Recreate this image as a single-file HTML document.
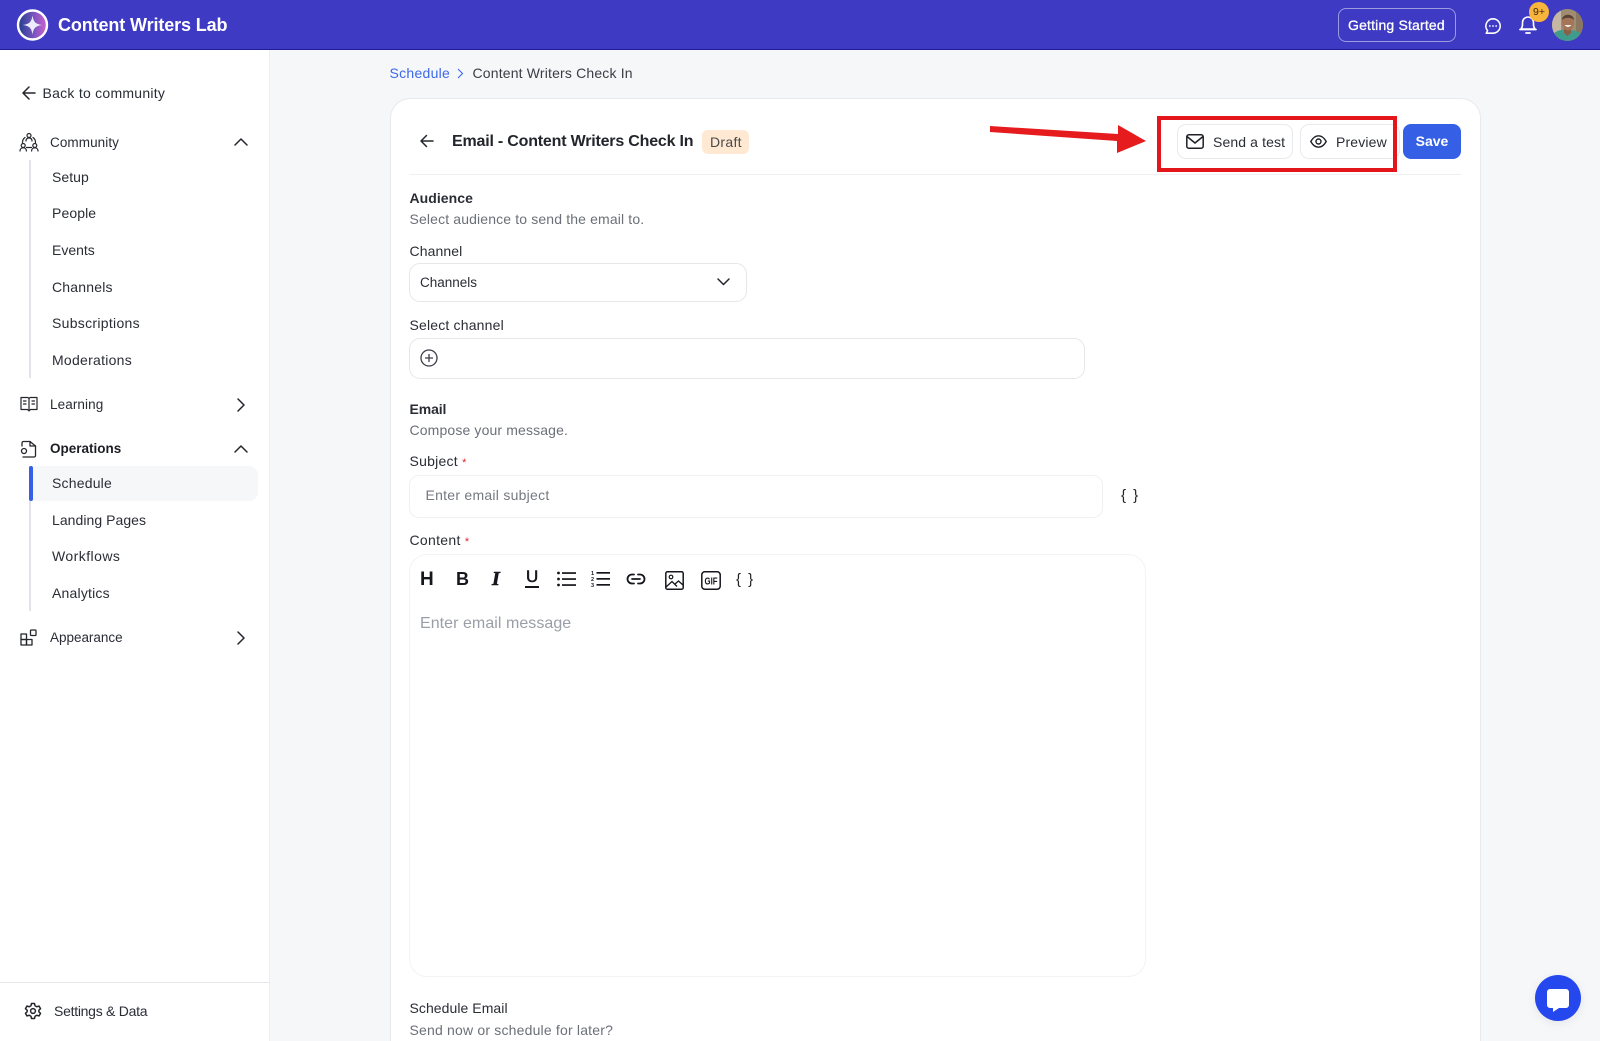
<!DOCTYPE html>
<html><head><meta charset="utf-8"><title>Content Writers Lab</title>
<style>
html,body{margin:0;padding:0;width:1600px;height:1041px;overflow:hidden;background:#f6f7f9;font-family:"Liberation Sans",sans-serif;color:#23262e}
#w{position:relative;width:1600px;height:1041px;overflow:hidden;background:#f6f7f9}
.a{position:absolute;box-sizing:border-box}
.t{position:absolute;white-space:nowrap;line-height:20px;font-size:14px;color:#2a2d35}
.m{color:#6b7078}
.b{font-weight:bold}
svg{position:absolute;overflow:visible}
.i{fill:none;stroke:#24262c;stroke-width:1.5;stroke-linecap:round;stroke-linejoin:round}
</style></head><body><div id="w">

<!-- header -->
<div class="a" style="left:0;top:0;width:1600px;height:50px;background:#3e3ac3;border-bottom:1px solid #1f1c96"></div>
<svg style="left:0;top:0" width="70" height="50"><defs><linearGradient id="g" x1="0" x2="1" y1="0" y2="0"><stop offset="0" stop-color="#1f3f8e"/><stop offset=".55" stop-color="#7a55c0"/><stop offset="1" stop-color="#d15fd0"/></linearGradient></defs>
<circle cx="32.500" cy="25" r="14.500" fill="url(#g)" stroke="#fff" stroke-width="2.400"/>
<path d="M32.500 15.500C33.600 22 35.500 24 42 25C35.500 26 33.600 28 32.500 34.500C31.400 28 29.500 26 23 25C29.500 24 31.400 22 32.500 15.500Z" fill="#ecebfc"/></svg>
<div class="t b" style="left:58px;top:15px;font-size:18px;color:#fff;letter-spacing:-.12px">Content Writers Lab</div>
<div class="a" style="left:1338px;top:8px;width:118px;height:34px;border:1px solid #9d9be0;border-radius:8px"></div>
<div class="t" style="left:1348px;top:15px;color:#fff;letter-spacing:.18px;-webkit-text-stroke:.3px #fff">Getting Started</div>
<svg style="left:1483.500px;top:16.500px" width="18" height="18" viewBox="0 0 20 20"><path d="M10 2a8 8 0 0 1 0 16H2.500l1.500-2.800A8 8 0 0 1 10 2Z" fill="none" stroke="#fff" stroke-width="1.700" stroke-linejoin="round"/><circle cx="6.500" cy="10" r="1" fill="#fff"/><circle cx="10" cy="10" r="1" fill="#fff"/><circle cx="13.500" cy="10" r="1" fill="#fff"/></svg>
<svg style="left:1519px;top:15px" width="18" height="20" viewBox="0 0 18 20"><path d="M2 14c1-1.200 1.500-2 1.500-4.500V7.500a5.500 5.500 0 0 1 11 0v2c0 2.500.5 3.300 1.500 4.500Z" fill="none" stroke="#fff" stroke-width="1.600" stroke-linejoin="round"/><path d="M1 14.500h16M7 18h4" stroke="#fff" stroke-width="1.800" stroke-linecap="round"/></svg>
<div class="a" style="left:1529px;top:2px;width:20px;height:20px;border-radius:50%;background:#f9b43c;color:#3a2a10;font-size:10.500px;line-height:20px;text-align:center">9+</div>
<svg style="left:1552px;top:9px" width="31" height="32" viewBox="0 0 31 32"><defs><clipPath id="c"><ellipse cx="15.500" cy="16" rx="15.500" ry="16"/></clipPath></defs><g clip-path="url(#c)"><rect width="31" height="32" fill="#a08c70"/><rect width="9" height="32" fill="#c4b8a4"/><rect x="24" width="7" height="32" fill="#8a7760"/><path d="M0 32V26C5 21 10 20 15 22C21 20 27 22 31 27V32Z" fill="#3f9b8c"/><path d="M12 19h7v5l-3.500 3L12 24Z" fill="#8a5f48"/><ellipse cx="16" cy="13.500" rx="6" ry="8" fill="#a5755a"/><path d="M10 11C10 4 22 4 22 11C19 8 13 8 10 11Z" fill="#5a4238"/><path d="M12.500 16Q16 20 19.500 16Z" fill="#f3eee8"/></g></svg>

<!-- sidebar -->
<div class="a" style="left:0;top:50px;width:270px;height:991px;background:#fff;border-right:1px solid #eceef1"></div>
<svg style="left:22px;top:85px" width="14" height="16" viewBox="0 0 14 16"><path class="i" d="M13 8H1M7 2 1 8l6 6"/></svg>
<div class="t" style="left:42.500px;top:83px;letter-spacing:.26px">Back to community</div>

<svg style="left:19px;top:132px" width="20" height="20" viewBox="0 0 20 20"><g class="i" style="stroke-width:1.200"><circle cx="10" cy="3.500" r="2"/><path d="M7 9c0-2 1.300-3 3-3s3 1 3 3"/><circle cx="4.200" cy="13.500" r="2"/><path d="M1 19c0-2 1.400-3.200 3.200-3.200S7.400 17 7.400 19"/><circle cx="15.800" cy="13.500" r="2"/><path d="M12.600 19c0-2 1.400-3.200 3.200-3.200s3.200 1.200 3.200 3.200"/><path d="M3.500 10.500C3.500 8 4.500 6.500 6 5.500M16.500 10.500c0-2.500-1-4-2.500-5M7.500 15.500h5"/></g></svg>
<div class="t" style="left:50px;top:133px;font-size:13.500px;letter-spacing:.08px">Community</div>
<svg style="left:234px;top:138px" width="14" height="8" viewBox="0 0 14 8"><path class="i" d="M1 7l6-6 6 6"/></svg>
<div class="a" style="left:29px;top:160px;width:2px;height:218px;background:#e1e3e8"></div>
<div class="t" style="left:52px;top:167px;letter-spacing:.05px">Setup</div>
<div class="t" style="left:52px;top:203px;letter-spacing:.1px">People</div>
<div class="t" style="left:52px;top:240px;letter-spacing:0">Events</div>
<div class="t" style="left:52px;top:277px;letter-spacing:.2px">Channels</div>
<div class="t" style="left:52px;top:313px;letter-spacing:.3px">Subscriptions</div>
<div class="t" style="left:52px;top:350px;letter-spacing:.27px">Moderations</div>

<svg style="left:20px;top:396px" width="18" height="16" viewBox="0 0 18 16"><g class="i" style="stroke-width:1.200"><path d="M1 1.500h7l1 1 1-1h7v12h-6.500L9 15l-1.500-1.500H1Z"/><path d="M9 2.500v11M3.500 5H6M3.500 8H6M12 5h2.500M12 8h2.500"/></g></svg>
<div class="t" style="left:50px;top:395px;font-size:13.500px;letter-spacing:.1px">Learning</div>
<svg style="left:237px;top:398px" width="8" height="14" viewBox="0 0 8 14"><path class="i" d="M1 1l6 6-6 6"/></svg>

<svg style="left:20px;top:440px" width="17" height="18" viewBox="0 0 17 18"><g class="i" style="stroke-width:1.300"><path d="M2 6V3a1.500 1.500 0 0 1 1.500-1.500H10L15.500 6v9.500A1.500 1.500 0 0 1 14 17H3"/><path d="M10 1.500V6h5.500"/><circle cx="4" cy="11" r="2.500"/></g></svg>
<div class="t b" style="left:50px;top:439px;font-size:13.500px;letter-spacing:0;color:#1c1e24">Operations</div>
<svg style="left:234px;top:445px" width="14" height="8" viewBox="0 0 14 8"><path class="i" d="M1 7l6-6 6 6"/></svg>
<div class="a" style="left:29px;top:466px;width:2px;height:145px;background:#e1e3e8"></div>
<div class="a" style="left:30px;top:466px;width:228px;height:35px;background:#f6f7f9;border-radius:0 9px 9px 0"></div>
<div class="a" style="left:29px;top:466px;width:4px;height:35px;background:#3560e6;border-radius:3px"></div>
<div class="t" style="left:52px;top:473px;letter-spacing:.2px">Schedule</div>
<div class="t" style="left:52px;top:510px;letter-spacing:.05px">Landing Pages</div>
<div class="t" style="left:52px;top:546px;letter-spacing:.45px">Workflows</div>
<div class="t" style="left:52px;top:583px;letter-spacing:.2px">Analytics</div>

<svg style="left:20px;top:629px" width="17" height="17" viewBox="0 0 17 17"><g class="i" style="stroke-width:1.300"><rect x="1" y="5" width="5.500" height="5.500"/><rect x="1" y="10.500" width="5.500" height="5.500"/><rect x="6.500" y="10.500" width="5.500" height="5.500"/><rect x="10.500" y="1" width="5.500" height="5.500" rx=".8"/></g></svg>
<div class="t" style="left:50px;top:628px;font-size:13.500px;letter-spacing:-.02px">Appearance</div>
<svg style="left:237px;top:631px" width="8" height="14" viewBox="0 0 8 14"><path class="i" d="M1 1l6 6-6 6"/></svg>

<div class="a" style="left:0;top:982px;width:269px;height:1px;background:#e4e6ea"></div>
<svg style="left:24px;top:1002px" width="18" height="18" viewBox="0 0 24 24"><g class="i" style="stroke-width:2"><circle cx="12" cy="12" r="3.200"/><path d="M10 2h4l.7 3 2.300 1.300 3-.9 2 3.500-2.200 2.100v2l2.200 2.100-2 3.500-3-.9L14.700 19 14 22h-4l-.7-3L7 17.700l-3 .9-2-3.500L4.200 13v-2L2 8.900l2-3.500 3 .9L9.300 5Z"/></g></svg>
<div class="t" style="left:54px;top:1001px;font-size:14px;letter-spacing:-.27px">Settings &amp; Data</div>

<!-- breadcrumb -->
<div class="t" style="left:389.500px;top:63px;color:#3d68e8;letter-spacing:.28px">Schedule</div>
<svg style="left:457px;top:68px" width="7" height="11" viewBox="0 0 7 11"><path d="M1 1l4.500 4.500L1 10" fill="none" stroke="#3d68e8" stroke-width="1.100"/></svg>
<div class="t" style="left:472.500px;top:63px;letter-spacing:.17px;color:#3a3d45">Content Writers Check In</div>

<!-- card -->
<div class="a" style="left:390px;top:98px;width:1091px;height:943px;background:#fff;border:1px solid #e8e9ed;border-bottom:0;border-radius:20px 20px 0 0"></div>
<svg style="left:420px;top:134px" width="14" height="14" viewBox="0 0 14 14"><path class="i" d="M13 7H1M6.500 1.500 1 7l5.500 5.500"/></svg>
<div class="t b" style="left:452px;top:132px;font-size:16px;letter-spacing:-.2px;color:#22252b">Email - Content Writers Check In</div>
<div class="a" style="left:702px;top:130px;width:47px;height:24px;background:#ffe9d3;border-radius:6px"></div>
<div class="t" style="left:710px;top:132px;letter-spacing:.3px;color:#4a4a4a">Draft</div>
<div class="a" style="left:409px;top:174px;width:1052px;height:1px;background:#eff0f2"></div>

<!-- test / preview -->
<div class="a" style="left:1177px;top:124px;width:116px;height:35px;border:1px solid #e9eaed;border-radius:9px"></div>
<svg style="left:1186px;top:134px" width="18" height="15" viewBox="0 0 18 15"><rect x=".8" y=".8" width="16.400" height="13.400" rx="2" fill="none" stroke="#1e2026" stroke-width="1.500"/><path d="M1 2.500 9 9l8-6.500" fill="none" stroke="#1e2026" stroke-width="1.500"/></svg>
<div class="t" style="left:1213px;top:132px;letter-spacing:.12px">Send a test</div>
<div class="a" style="left:1300px;top:124px;width:100px;height:35px;border:1px solid #e9eaed;border-radius:9px"></div>
<svg style="left:1310px;top:135px" width="17" height="13" viewBox="0 0 17 13"><path d="M.8 6.500C3 2.500 5.500.8 8.500.8S14 2.500 16.200 6.500C14 10.500 11.500 12.200 8.500 12.200S3 10.500.8 6.500Z" fill="none" stroke="#1e2026" stroke-width="1.400"/><circle cx="8.500" cy="6.500" r="2.500" fill="none" stroke="#1e2026" stroke-width="1.400"/></svg>
<div class="t" style="left:1336px;top:132px;letter-spacing:.15px;background:#fff;padding-right:6px">Preview</div>
<div class="a" style="left:1157px;top:116px;width:240px;height:56px;border:4.500px solid #e4161c"></div>
<svg style="left:0;top:0" width="1200" height="200"><path d="M990 126 1118 134V125L1146 141 1117 153V141L990 132Z" fill="#e51b1e"/></svg>
<div class="a b" style="left:1403px;top:124px;width:58px;height:35px;background:#3560e6;border-radius:8px;color:#fff;font-size:14px;line-height:35px;text-align:center;letter-spacing:0">Save</div>

<!-- form -->
<div class="t b" style="left:409.500px;top:188px;letter-spacing:.05px">Audience</div>
<div class="t m" style="left:409.500px;top:209px;letter-spacing:.14px">Select audience to send the email to.</div>
<div class="t" style="left:409.500px;top:241px;letter-spacing:.1px">Channel</div>
<div class="a" style="left:409px;top:263px;width:338px;height:39px;border:1px solid #e6e7eb;border-radius:11px"></div>
<div class="t" style="left:420px;top:273px;font-size:13.500px;letter-spacing:0">Channels</div>
<svg style="left:717px;top:278px" width="13" height="8" viewBox="0 0 13 8"><path class="i" d="M1 1l5.500 5.500L12 1"/></svg>
<div class="t" style="left:409.500px;top:315px;letter-spacing:.18px">Select channel</div>
<div class="a" style="left:409px;top:338px;width:676px;height:41px;border:1px solid #e6e7eb;border-radius:11px"></div>
<svg style="left:420px;top:349px" width="18" height="18" viewBox="0 0 18 18"><circle cx="9" cy="9" r="8" fill="none" stroke="#3c3e48" stroke-width="1.300"/><path d="M9 5v8M5 9h8" stroke="#3c3e48" stroke-width="1.300"/></svg>

<div class="t b" style="left:409.500px;top:399px;letter-spacing:-.1px">Email</div>
<div class="t m" style="left:409.500px;top:420px;letter-spacing:.14px">Compose your message.</div>
<div class="t" style="left:409.500px;top:451px;letter-spacing:.25px">Subject <span style="color:#e5202a;font-size:11px">*</span></div>
<div class="a" style="left:409px;top:475px;width:694px;height:43px;border:1px solid #f0f1f3;border-radius:10px"></div>
<div class="t m" style="left:425.500px;top:485px;letter-spacing:.26px;color:#757980">Enter email subject</div>
<div class="t" style="left:1121px;top:486px;font-size:15px;letter-spacing:1.500px;color:#222">{ }</div>
<div class="t" style="left:409.500px;top:530px;letter-spacing:.3px">Content <span style="color:#e5202a;font-size:11px">*</span></div>
<div class="a" style="left:409px;top:554px;width:737px;height:423px;border:1px solid #f2f3f5;border-radius:18px"></div>

<!-- toolbar -->
<div class="t b" style="left:420px;top:569px;font-size:19px;line-height:22px;letter-spacing:0;color:#15171c">H</div>
<div class="t b" style="left:456px;top:569px;font-size:18px;line-height:20px;letter-spacing:0;color:#15171c">B</div>
<div class="t b" style="left:492px;top:569px;font-family:'Liberation Serif',serif;font-size:20px;line-height:20px;font-style:italic;letter-spacing:0;color:#15171c;-webkit-text-stroke:.6px #15171c">I</div>
<div class="t" style="left:526px;top:567px;font-size:17px;line-height:20px;letter-spacing:0;color:#15171c;-webkit-text-stroke:.5px #15171c">U</div>
<div class="a" style="left:525px;top:586px;width:14px;height:2px;background:#15171c"></div>
<svg style="left:557px;top:571px" width="19" height="16" viewBox="0 0 19 16" fill="#15171c"><circle cx="1.500" cy="2" r="1.400"/><circle cx="1.500" cy="8" r="1.400"/><circle cx="1.500" cy="14" r="1.400"/><rect x="5" y="1.200" width="14" height="1.700"/><rect x="5" y="7.200" width="14" height="1.700"/><rect x="5" y="13.200" width="14" height="1.700"/></svg>
<svg style="left:591px;top:570px" width="19" height="17" viewBox="0 0 19 17" fill="#15171c"><rect x="5.500" y="2" width="13.500" height="1.700"/><rect x="5.500" y="8" width="13.500" height="1.700"/><rect x="5.500" y="14" width="13.500" height="1.700"/><text x="0" y="5" font-size="5.500" font-family="Liberation Sans" font-weight="bold">1</text><text x="0" y="11" font-size="5.500" font-family="Liberation Sans" font-weight="bold">2</text><text x="0" y="17" font-size="5.500" font-family="Liberation Sans" font-weight="bold">3</text></svg>
<svg style="left:626px;top:573px" width="20" height="12" viewBox="0 0 20 12"><path d="M8 1.500H6a4.500 4.500 0 0 0 0 9h2M12 1.500h2a4.500 4.500 0 0 1 0 9h-2M6 6h8" fill="none" stroke="#15171c" stroke-width="1.800" stroke-linecap="round"/></svg>
<svg style="left:665px;top:570.500px" width="19" height="19" viewBox="0 0 19 19"><rect x=".8" y=".8" width="17.400" height="17.400" rx="1.500" fill="none" stroke="#15171c" stroke-width="1.500"/><circle cx="6" cy="6" r="1.800" fill="none" stroke="#15171c" stroke-width="1.200"/><path d="M1 16 7 10.500l5 5M10 13l3.500-3 4.500 4" fill="none" stroke="#15171c" stroke-width="1.300"/></svg>
<svg style="left:701px;top:570.500px" width="20" height="19" viewBox="0 0 20 19"><rect x=".8" y=".8" width="18.400" height="17.400" rx="3" fill="none" stroke="#15171c" stroke-width="1.500"/><text x="10" y="13.500" text-anchor="middle" font-size="10" font-weight="bold" font-family="Liberation Sans" fill="#15171c" textLength="13" lengthAdjust="spacingAndGlyphs">GIF</text></svg>
<div class="t" style="left:736px;top:570px;font-size:15px;letter-spacing:1.500px;color:#222">{ }</div>
<div class="t" style="left:420px;top:614px;font-size:16px;letter-spacing:.05px;color:#9a9ea6">Enter email message</div>

<div class="t" style="left:409.500px;top:998px;letter-spacing:.06px">Schedule Email</div>
<div class="t m" style="left:409.500px;top:1020px;letter-spacing:.19px;line-height:20px;height:20px">Send now or schedule for later?</div>

<!-- chat -->
<div class="a" style="left:1535px;top:975px;width:46px;height:46px;border-radius:50%;background:#2547ee;box-shadow:0 2px 10px rgba(0,0,0,.08)"></div>
<svg style="left:1546px;top:988px" width="24" height="24" viewBox="0 0 24 24"><path d="M4 1h16a3 3 0 0 1 3 3v13a3 3 0 0 1-3 3H13l-6 4v-4H4a3 3 0 0 1-3-3V4a3 3 0 0 1 3-3Z" fill="#fff"/></svg>
</div></body></html>
